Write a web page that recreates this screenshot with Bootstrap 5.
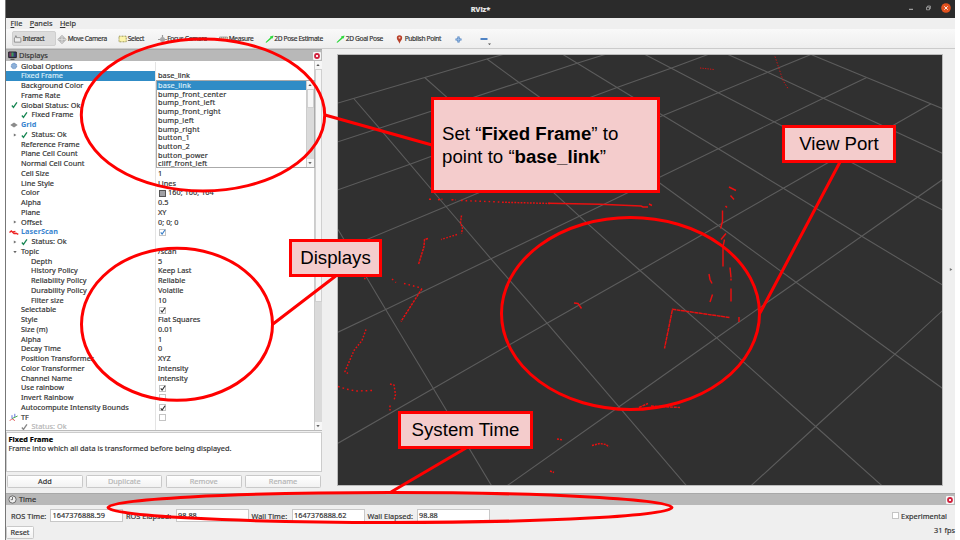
<!DOCTYPE html>
<html lang="en">
<head>
<meta charset="utf-8">
<title>RViz*</title>
<link rel="stylesheet" href="https://cdn.jsdelivr.net/npm/bootstrap@5.3.0/dist/css/bootstrap.min.css">
<style>
body{width:960px;height:540px;background:#fff;font-family:"Noto Sans",sans-serif;font-size:7.3px;line-height:9.76px;letter-spacing:.04px;color:#333;-webkit-text-stroke:.18px currentColor}
svg{display:block;flex:none}
.app-window{width:950px;height:540px;margin-left:5px;background:#efefef;border-left:1px solid #777}
.titlebar{height:18px;background:#2b2b2b;color:#eee;font-weight:700;font-size:7.4px;letter-spacing:0;padding-top:1px}
.win-ctl{right:3px;top:3px}
.menubar{height:11px;padding-left:4.5px;gap:7.4px}
.toolbar{height:20px;background:linear-gradient(#f9f9f9,#eee);border-bottom:1px solid #cbcbcb;font-size:6.6px;letter-spacing:-.32px;padding-left:6px}
.tool{height:15px;gap:.7px;padding-left:1px;padding-top:1px}
.tool-on{background:#dcdcdc;border:1px solid #cfcfcf;border-radius:2px;padding-left:0}
.workspace{height:444px}
.dock{width:316px}
.dock-title{height:12px;background:#b8b8b8;border-top:1px solid #a8a8a8;padding-left:2px;gap:2px;font-size:7.4px;letter-spacing:0}
.close-sq{width:8px;height:8px;background:#f5f5f5;border-radius:1px;margin-right:1px}
.tree{height:369.5px;background:#fff;border-bottom:1px solid #bbb}
.rows{width:308px;padding-top:.5px}
.prop{height:9.76px}
.nm{width:150px;border-right:1px solid #e4e4e4;padding-left:3px}
.vl{padding-left:2px}
.ic{width:10px;margin-right:2px;display:flex;justify-content:center;flex:none}
.ex{width:12px;padding-left:4px;flex:none}
.sub{padding-left:25px}
.ck{width:10.5px;padding-left:0;flex:none}
.disp{color:#3a85d0;font-weight:700;-webkit-text-stroke:0}
.sel .nm{background:#308cc6;color:#d9ecf8}
.dim{color:#b5b5b5}
.cb{width:7px;height:7px;border:1px solid #c4c4c4;background:#fff;margin-left:1px}
.cb svg{margin:-.5px 0 0 -.5px}
.swatch{width:7px;height:7px;background:#a0a0a4;border:1px solid #555;margin:0 2px 0 1px}
.sbar{width:7.5px;background:#dadada;border-left:1px solid #ccc}
.sb-end{height:8px;background:#f7f7f7;color:#555}
.sb-thumb{height:233px;background:#f7f7f7;border:1px solid #d0d0d0}
.popup{left:150px;top:19px;width:158.5px;height:88px;background:#fff;border:1px solid #aaa}
.popup li{height:8.73px;line-height:8.9px;padding-left:1px;letter-spacing:.16px}
.popup .on{background:#308cc6;color:#d9ecf8}
.desc{height:39.5px;margin-top:1.5px;background:#fff;border:1px solid #ccc;padding:2px 1.5px;line-height:9px}
.btnrow{padding:3.5px 1px 0;gap:3.5px}
.flatbtn{height:13px;line-height:11.5px;border:1px solid #c9c9c9;border-radius:1.5px;background:linear-gradient(#fff,#f2f2f2);text-align:center}
.view{width:606px;height:432px;margin:4.5px 0 0 15px;border:1px solid #bbb;background:#303030}
.timebar{height:12px}
.fields{height:21px;padding-left:5px;line-height:12px}
.tin{width:73px;height:13px;line-height:10.5px;border:1px solid #c8c8c8;background:#fff;padding-left:1.5px;letter-spacing:.03px}
.callout-box{background:#f4cccc;border:3px solid #f00;color:#000;font-family:"Liberation Sans",sans-serif;font-size:18.67px;line-height:22.3px;letter-spacing:0;display:flex;align-items:center;justify-content:center;padding-top:1px;-webkit-text-stroke:0}
.c-main{left:431px;top:97px;width:229px;height:96px;justify-content:flex-start;padding-left:8px}
.c-view{left:782px;top:125px;width:114px;height:38px}
.c-disp{left:289px;top:239px;width:93px;height:38px}
.c-time{left:398px;top:411px;width:135px;height:38px}
</style>
<script src="https://cdn.jsdelivr.net/npm/bootstrap@5.3.0/dist/js/bootstrap.bundle.min.js"></script>
</head>
<body class="position-relative overflow-hidden m-0 text-nowrap">
<svg width="0" height="0" class="position-absolute">
<defs>
<symbol id="chk" viewBox="0 0 8 8"><path d="M1 4.6 2.8 6.8 6.8 1" fill="none" stroke="currentColor" stroke-width="1.5"/></symbol>
<symbol id="tri" viewBox="0 0 4 4"><path d="M.8.5 3.4 2 .8 3.5z" fill="#777"/></symbol>
<symbol id="tid" viewBox="0 0 4 4"><path d="M.3 1 3.7 1 2 3.3z" fill="#666"/></symbol>
<symbol id="tiu" viewBox="0 0 4 4"><path d="M.3 3 3.7 3 2 .9z" fill="#555"/></symbol>
<symbol id="cls" viewBox="0 0 8 8"><circle cx="4" cy="4" r="2.9" fill="#d0203c"/><path d="m3 3 2 2m0-2-2 2" stroke="#fff" stroke-width=".9"/></symbol>
<symbol id="mov" viewBox="0 0 10 10"><path d="M5 .3 7 2.5H6V4h1.7V3L9.8 5 7.7 7V6H6v1.5h1L5 9.7 3 7.5h1V6H2.3v1L.2 5l2.1-2v1H4V2.5H3z" fill="#ddd" stroke="#8a8a8a" stroke-width=".6"/></symbol>
<symbol id="arr" viewBox="0 0 9 8"><path d="M.5 7.2 5.4 2.4 5 1.6 8.6.4 7.6 3.600 6.900 3.300 1.400 7.700z" fill="#2bd83a"/></symbol>
</defs>
</svg>

<div class="app-window">
  <header class="titlebar position-relative d-flex align-items-center justify-content-center">RViz*
    <svg class="win-ctl position-absolute" width="46" height="10"><path d="M3 6.3h4" stroke="#bbb"/><path d="M20.5 4.2h3v2.6h-3zM21.6 4V3h2.8v2.7h-.8" fill="none" stroke="#aaa" stroke-width=".8"/><circle cx="40" cy="5" r="4.8" fill="#e2521f"/><path d="m38.3 3.3 3.4 3.4m0-3.4-3.4 3.4" stroke="#fff" stroke-width=".9"/></svg>
  </header>
  <nav class="menubar d-flex align-items-center"><span><u>F</u>ile</span><span><u>P</u>anels</span><span><u>H</u>elp</span></nav>
  <div class="toolbar d-flex align-items-center">
    <div class="tool tool-on d-flex align-items-center" style="width:44px"><svg width="9" height="8" viewBox="0 0 9 9"><path d="M1 8V3.2l1.2-.5V1h1v2h4.4l.7.6V8z" fill="#eee" stroke="#777" stroke-width=".8"/></svg>Interact</div>
    <div class="tool d-flex align-items-center" style="width:61px"><svg width="10" height="9"><use href="#mov"/></svg>Move Camera</div>
    <div class="tool d-flex align-items-center" style="width:39.5px"><svg width="9" height="8"><path d="M1 1.2h7.2v5.6H1z" fill="#fdf5ac" stroke="#87823f" stroke-width=".8" stroke-dasharray="1 .5"/></svg>Select</div>
    <div class="tool d-flex align-items-center" style="width:61.5px"><svg width="9" height="9" viewBox="0 0 9 9"><path d="M4.500 0v9M0 4.500h9" stroke="#999" stroke-width="1.200"/><circle cx="4.500" cy="4.500" r="2.500" fill="#aaa"/></svg>Focus Camera</div>
    <div class="tool d-flex align-items-center" style="width:45.5px"><svg width="9" height="6"><path d="M.5 1h8v3.4h-8z" fill="#ddd8b8" stroke="#888" stroke-width=".7"/><path d="M2.5 1v1.5m2-1.5v1.5m2-1.5v1.5" stroke="#777" stroke-width=".5"/></svg>Measure</div>
    <div class="tool d-flex align-items-center" style="width:71.5px"><svg width="9" height="8"><use href="#arr"/></svg>2D Pose Estimate</div>
    <div class="tool d-flex align-items-center" style="width:60px"><svg width="9" height="8"><use href="#arr"/></svg>2D Goal Pose</div>
    <div class="tool d-flex align-items-center" style="width:59px"><svg width="8" height="9" viewBox="0 0 8 9"><path d="M3.5 8.8C3.2 6.2.8 5 .8 2.9a2.7 2.7 0 0 1 5.4 0C6.2 5 3.8 6.2 3.5 8.8z" fill="#b8402a"/><circle cx="3.500" cy="2.800" r="1" fill="#f4c3b5"/></svg>Publish Point</div>
    <div class="tool d-flex align-items-center" style="width:25px"><svg width="7" height="7"><path d="M3.5.5v6M.5 3.5h6" stroke="#4a7fc0" stroke-width="2.2"/><path d="M3.5 1.2v4.6M1.2 3.5h4.6" stroke="#a5c4e8" stroke-width=".7"/></svg></div>
    <div class="tool d-flex align-items-center"><svg width="12" height="12"><path d="M.5 6h7" stroke="#4f83c4" stroke-width="2"/><path d="M8 10.5h3l-1.500 1.400z" fill="#444"/></svg></div>
  </div>

  <main class="workspace d-flex">
    <section class="dock">
      <div class="dock-title d-flex align-items-center"><svg width="9" height="9"><path d="M.7 1h7.6v5.6H.7z" fill="#3b3b78" stroke="#222"/><path d="M1.5 1.500h2v4h-2z" fill="#8e3a52"/><path d="M3.500 1.500h2v4h-2z" fill="#3f9a58"/><path d="M2.500 8.300h4" stroke="#444"/></svg><span class="me-auto">Displays</span><div class="close-sq"><svg width="8" height="8"><use href="#cls"/></svg></div></div>
      <div class="tree d-flex position-relative">
        <div class="rows overflow-hidden">
          <div class="prop d-flex"><div class="nm d-flex align-items-center"><i class="ic"><svg width="8" height="8"><circle cx="4" cy="4" r="2.7" fill="#8db0d8" stroke="#5f8cc4" stroke-dasharray="1.2 .6"/></svg></i>Global Options</div></div>
          <div class="prop d-flex sel"><div class="nm d-flex"><i class="ex"></i>Fixed Frame</div><div class="vl">base_link</div></div>
          <div class="prop d-flex"><div class="nm d-flex"><i class="ex"></i>Background Color</div></div>
          <div class="prop d-flex"><div class="nm d-flex"><i class="ex"></i>Frame Rate</div></div>
          <div class="prop d-flex"><div class="nm d-flex align-items-center"><i class="ic text-success"><svg width="7" height="8"><use href="#chk"/></svg></i>Global Status: Ok</div></div>
          <div class="prop d-flex"><div class="nm d-flex align-items-center"><i class="ex"></i><i class="ck text-success"><svg width="7" height="8"><use href="#chk"/></svg></i>Fixed Frame</div></div>
          <div class="prop d-flex"><div class="nm d-flex align-items-center disp"><i class="ic"><svg width="8" height="6"><path d="M.3 3 4 .5 7.7 3 4 5.5z" fill="#8b8b8b"/></svg></i>Grid</div></div>
          <div class="prop d-flex"><div class="nm d-flex align-items-center"><i class="ex"><svg width="4" height="4"><use href="#tri"/></svg></i><i class="ck text-success"><svg width="7" height="8"><use href="#chk"/></svg></i>Status: Ok</div></div>
          <div class="prop d-flex"><div class="nm d-flex"><i class="ex"></i>Reference Frame</div></div>
          <div class="prop d-flex"><div class="nm d-flex"><i class="ex"></i>Plane Cell Count</div></div>
          <div class="prop d-flex"><div class="nm d-flex"><i class="ex"></i>Normal Cell Count</div></div>
          <div class="prop d-flex"><div class="nm d-flex"><i class="ex"></i>Cell Size</div><div class="vl">1</div></div>
          <div class="prop d-flex"><div class="nm d-flex"><i class="ex"></i>Line Style</div><div class="vl">Lines</div></div>
          <div class="prop d-flex"><div class="nm d-flex"><i class="ex"></i>Color</div><div class="vl d-flex align-items-center"><i class="swatch"></i>160; 160; 164</div></div>
          <div class="prop d-flex"><div class="nm d-flex"><i class="ex"></i>Alpha</div><div class="vl">0.5</div></div>
          <div class="prop d-flex"><div class="nm d-flex"><i class="ex"></i>Plane</div><div class="vl">XY</div></div>
          <div class="prop d-flex"><div class="nm d-flex align-items-center"><i class="ex"><svg width="4" height="4"><use href="#tri"/></svg></i>Offset</div><div class="vl">0; 0; 0</div></div>
          <div class="prop d-flex"><div class="nm d-flex align-items-center disp"><i class="ic"><svg width="10" height="7"><path d="M.5 3.5 2.3 2 5 4.6 7 4.2 9.3 5.4M4 3 6.4 2.4" fill="none" stroke="#e22" stroke-width="1.4"/></svg></i>LaserScan</div><div class="vl d-flex align-items-center"><div class="cb" style="color:#3a7fc8"><svg width="6" height="6"><use href="#chk"/></svg></div></div></div>
          <div class="prop d-flex"><div class="nm d-flex align-items-center"><i class="ex"><svg width="4" height="4"><use href="#tri"/></svg></i><i class="ck text-success"><svg width="7" height="8"><use href="#chk"/></svg></i>Status: Ok</div></div>
          <div class="prop d-flex"><div class="nm d-flex align-items-center"><i class="ex"><svg width="4" height="4"><use href="#tid"/></svg></i>Topic</div><div class="vl">/scan</div></div>
          <div class="prop d-flex"><div class="nm sub">Depth</div><div class="vl">5</div></div>
          <div class="prop d-flex"><div class="nm sub">History Policy</div><div class="vl">Keep Last</div></div>
          <div class="prop d-flex"><div class="nm sub">Reliability Policy</div><div class="vl">Reliable</div></div>
          <div class="prop d-flex"><div class="nm sub">Durability Policy</div><div class="vl">Volatile</div></div>
          <div class="prop d-flex"><div class="nm sub">Filter size</div><div class="vl">10</div></div>
          <div class="prop d-flex"><div class="nm d-flex"><i class="ex"></i>Selectable</div><div class="vl d-flex align-items-center"><div class="cb"><svg width="6" height="6"><use href="#chk"/></svg></div></div></div>
          <div class="prop d-flex"><div class="nm d-flex"><i class="ex"></i>Style</div><div class="vl">Flat Squares</div></div>
          <div class="prop d-flex"><div class="nm d-flex"><i class="ex"></i>Size (m)</div><div class="vl">0.01</div></div>
          <div class="prop d-flex"><div class="nm d-flex"><i class="ex"></i>Alpha</div><div class="vl">1</div></div>
          <div class="prop d-flex"><div class="nm d-flex"><i class="ex"></i>Decay Time</div><div class="vl">0</div></div>
          <div class="prop d-flex"><div class="nm d-flex"><i class="ex"></i>Position Transformer</div><div class="vl">XYZ</div></div>
          <div class="prop d-flex"><div class="nm d-flex"><i class="ex"></i>Color Transformer</div><div class="vl">Intensity</div></div>
          <div class="prop d-flex"><div class="nm d-flex"><i class="ex"></i>Channel Name</div><div class="vl">intensity</div></div>
          <div class="prop d-flex"><div class="nm d-flex"><i class="ex"></i>Use rainbow</div><div class="vl d-flex align-items-center"><div class="cb"><svg width="6" height="6"><use href="#chk"/></svg></div></div></div>
          <div class="prop d-flex"><div class="nm d-flex"><i class="ex"></i>Invert Rainbow</div><div class="vl d-flex align-items-center"><div class="cb"></div></div></div>
          <div class="prop d-flex"><div class="nm d-flex"><i class="ex"></i>Autocompute Intensity Bounds</div><div class="vl d-flex align-items-center"><div class="cb"><svg width="6" height="6"><use href="#chk"/></svg></div></div></div>
          <div class="prop d-flex"><div class="nm d-flex align-items-center"><i class="ic"><svg width="10" height="9" fill="none"><path d="M.8 7.8 3 5.6 5.8 7.6" stroke="#e05050"/><path d="M3 5.6 8.6 3" stroke="#4db04d"/><path d="M3 5.6V2.2M5.8 4V.8" stroke="#6675dd"/></svg></i>TF</div><div class="vl d-flex align-items-center"><div class="cb"></div></div></div>
          <div class="prop d-flex dim"><div class="nm d-flex align-items-center"><i class="ex"></i><i class="ck" style="color:#888"><svg width="7" height="8"><use href="#chk"/></svg></i>Status: Ok</div></div>
        </div>
        <div class="sbar d-flex flex-column">
          <div class="sb-end d-flex align-items-center justify-content-center"><svg width="4" height="4"><use href="#tiu"/></svg></div>
          <div class="sb-thumb"></div>
          <div class="sb-end d-flex align-items-center justify-content-center mt-auto"><svg width="4" height="4"><use href="#tid"/></svg></div>
        </div>
        <div class="popup position-absolute d-flex">
          <ul class="list-unstyled m-0 flex-fill overflow-hidden">
            <li class="on">base_link</li><li>bump_front_center</li><li>bump_front_left</li><li>bump_front_right</li><li>bump_left</li><li>bump_right</li><li>button_1</li><li>button_2</li><li>button_power</li><li>cliff_front_left</li>
          </ul>
          <div class="sbar d-flex flex-column">
            <div class="sb-end d-flex align-items-center justify-content-center"><svg width="4" height="4"><use href="#tiu"/></svg></div>
            <div class="sb-thumb" style="height:19px"></div>
            <div class="sb-end d-flex align-items-center justify-content-center mt-auto"><svg width="4" height="4"><use href="#tid"/></svg></div>
          </div>
        </div>
      </div>
      <div class="desc"><div class="fw-bold text-black">Fixed Frame</div><div>Frame into which all data is transformed before being displayed.</div></div>
      <div class="btnrow d-flex"><div class="flatbtn flex-fill w-25">Add</div><div class="flatbtn flex-fill w-25 dim">Duplicate</div><div class="flatbtn flex-fill w-25 dim">Remove</div><div class="flatbtn flex-fill w-25 dim">Rename</div></div>
    </section>

    <section class="view">
      <svg width="604" height="430" viewBox="338 54.5 604 430" fill="none">
        <g stroke="#5c5c5c" stroke-width="1.100">
          <path d="M338 102.5 424.7 77 487 58.5 503 54M338 141.3 379.3 127.7 519 82 577.7 62.5 605 54M338 189.3 410 163.7 617 87 671 67.7 708 54M338 251 446 206 663 115 718.3 92.3 767.7 71.7 811 54M338 331.7 385.7 309 491 258.3 579.3 215.7 718.3 148.3 823.3 97.7 866.7 77M338 442.7 433.3 388 547 322.7 640 270 718.3 225 783.3 187.7 931 103.3M506.7 485.5 619 406.3 716.7 337.3 796 281.7 861.7 235.7 942.3 179.3M750.7 485.5 815.7 426 895 353.7 942.3 310.3"/>
          <path d="M338 229 344 239 385.7 309 433.3 388 491.7 485.5M353.7 98 379.3 127.7 446 206 491 258.3 547 322.7 619 406.3 686.7 485.5M424.7 77 446.700 96.700 555 193.300 579.3 215.7 640 270 716.7 337.3 815.7 426 882.3 485.5M487 58.5 519 82 660 182.7 718.3 225 796 281.7 895 353.7 942.3 387.7M563 54 617 87 663 115 718.3 148.3 783.3 187.7 861.7 235.7 942.3 284.3M645 54 718.3 92.3 774 121.3 917.7 196.7 942.3 209.3M728 54 767.7 71.7 823.3 97.7 942.3 152.7M811 54 866.7 77 942.3 108"/>
        </g>
        <g stroke="#e81010" stroke-width="1.450">
          <path d="M429 198.7h2m7 .5 4.500-.6m9 .6 4 .4" stroke-dasharray="2 1.5"/>
          <path d="M461 200 500 201.500" stroke-dasharray="1.6 3"/>
          <path d="M502 201.700 550 203" stroke-dasharray="1.8 1.300"/>
          <path d="M548 202.700 600 203.800 641 205.500 643 206.500h5M649 203.500l3 1.500"/>
          <path d="M461.500 215 460.500 222 462.500 228 461.500 233" stroke-dasharray="2 1"/>
          <path d="M457 234 441 239" stroke-dasharray="1.6 1.6"/>
          <path d="M428 238 424.500 239 424 246 418.500 264" stroke-dasharray="2.500 .8"/>
          <path d="M392 278.500 396 282M404 283 421.500 287.500M364 278h2" stroke-dasharray="1.6 3"/>
          <path d="M422 288 401 321" stroke-dasharray="2.500 1"/>
          <path d="M366 329 362 340 354 350 345 371 348 373" stroke-dasharray="1.7 1.600"/>
          <path d="M338 386 346 388.500 356 390.500 373 390" stroke-dasharray="1.700 3"/>
          <path d="M390 383.500 394 384.500 395.500 394 394 400M390 405v5" stroke-dasharray="1.800 1.600"/>
          <path d="M574 302.500 578 303 581.500 308"/>
          <path d="M700 67.500 714 69" stroke-dasharray="1.300 1.200" stroke-width=".9"/>
          <path d="M775 56 783 80 788 88" stroke-dasharray="1.300 1.700" stroke-width=".9"/>
          <path d="M729 186.500 733 188.500 736 190M730.500 195 734 199M725.500 205.500 727 207"/>
          <path d="M722.500 210 722.500 221 720.500 228M726 233 721 239M724.500 239 723 246V266"/>
          <path d="M730 267 731 277M731 278v2M731 288V301M709 273.500 710 279 712 283M712.500 294 710 301.500M739 316.500v5"/>
          <path d="M729.500 317 672.500 308.800 664.500 348" stroke-dasharray="4 .5"/>
          <path d="M639 407 648 403M651 405.500 680 407" stroke-dasharray="3 .8"/>
          <path d="M557 438.500 563 439.500M592 445 600 443 606 444 609 446.500M550 470.500 554 472" stroke-dasharray="2 1"/>
        </g>
      </svg>
    </section>
    <div class="align-self-center ms-auto" style="padding:0 2px 4px 0"><svg width="4" height="5"><use href="#tri"/></svg></div>
  </main>

  <footer>
    <div class="dock-title timebar d-flex align-items-center"><svg width="9" height="9" fill="none" stroke="#555" stroke-width=".8"><circle cx="4.500" cy="4.500" r="3.600" fill="#eee"/><path d="M4.500 2v2.700h-1.800"/></svg><span class="me-auto">Time</span><div class="close-sq"><svg width="8" height="8"><use href="#cls"/></svg></div></div>
    <div class="fields d-flex align-items-center">
      <span style="width:39px">ROS Time:</span><div class="tin">1647376888.59</div>
      <span style="width:50.500px;margin-left:3px">ROS Elapsed:</span><div class="tin" style="margin-left:-1px">98.88</div>
      <span style="width:40px;margin-left:3px">Wall Time:</span><div class="tin">1647376888.62</div>
      <span style="width:49px;margin-left:3px">Wall Elapsed:</span><div class="tin">98.88</div>
      <div class="d-flex align-items-center ms-auto" style="padding-right:8px"><div class="cb" style="margin-right:2.500px"></div>Experimental</div>
    </div>
    <div class="d-flex justify-content-between align-items-center"><div class="flatbtn" style="width:28px">Reset</div><span class="pb-1">31 fps</span></div>
  </footer>
</div>

<svg class="position-absolute top-0 start-0" width="960" height="540" fill="none" stroke="#f00" stroke-width="3">
  <ellipse cx="203" cy="115" rx="121.700" ry="76"/>
  <ellipse cx="177" cy="324.300" rx="95.500" ry="76"/>
  <ellipse cx="630.500" cy="313.500" rx="129" ry="96"/>
  <ellipse cx="390" cy="507.500" rx="282" ry="15"/>
  <path d="M325 115 432 145M273 324 337 275M840 162 760 313M466 448 391 492"/>
</svg>
<div class="callout-box c-main position-absolute"><div>Set “<b>Fixed Frame</b>” to<br>point to “<b>base_link</b>”</div></div>
<div class="callout-box c-view position-absolute">View Port</div>
<div class="callout-box c-disp position-absolute">Displays</div>
<div class="callout-box c-time position-absolute">System Time</div>
</body>
</html>
